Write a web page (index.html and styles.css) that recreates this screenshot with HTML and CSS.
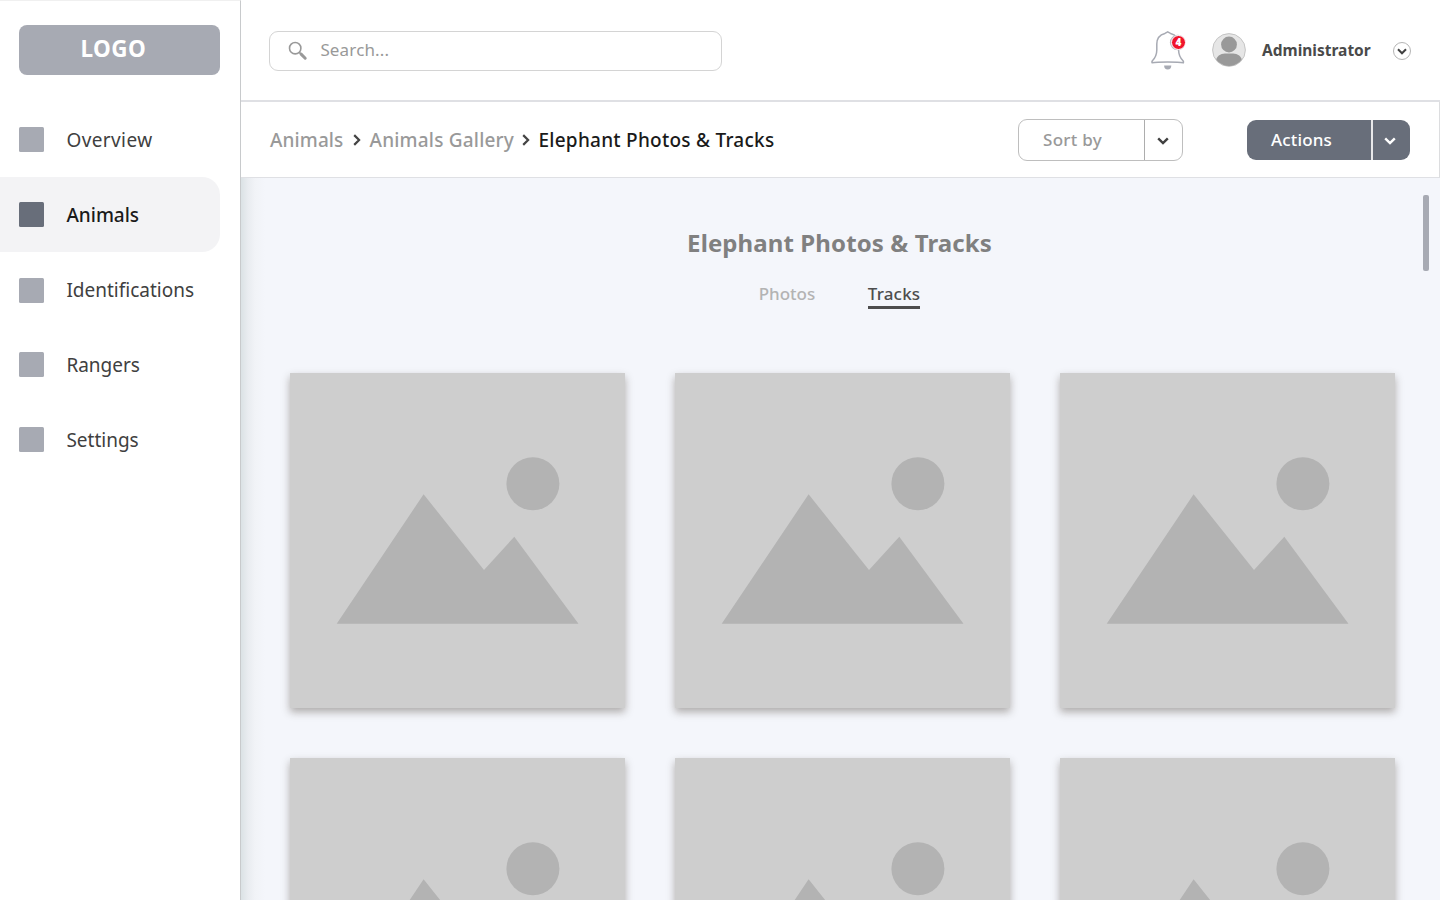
FILE: index.html
```html
<!DOCTYPE html>
<html lang="en">
<head>
<meta charset="utf-8">
<title>Elephant Photos &amp; Tracks</title>
<link rel="stylesheet" href="styles.css">
</head>
<body>
<svg class="defs" aria-hidden="true">
  <symbol id="chevron" viewBox="0 0 12 8"><path d="M1.2 1.300 6 6.100l4.800-4.800" fill="none" stroke="currentColor" stroke-width="2.400"/></symbol>
  <symbol id="landscape" viewBox="0 0 335 335">
    <circle cx="242.900" cy="110.700" r="26.500" fill="#b3b3b3"/>
    <path d="M46.700 250.800 133.600 121.300 194 197l30.300-33.300 64.200 87.100z" fill="#b3b3b3"/>
  </symbol>
</svg>
<div class="app">
  <aside class="sidebar">
    <div class="logo">LOGO</div>
    <nav class="nav">
      <a class="nav-item nav-overview"><span class="square"></span>Overview</a>
      <a class="nav-item active"><span class="square"></span>Animals</a>
      <a class="nav-item"><span class="square low"></span>Identifications</a>
      <a class="nav-item"><span class="square"></span>Rangers</a>
      <a class="nav-item"><span class="square"></span>Settings</a>
    </nav>
  </aside>
  <div class="page">
    <header class="header">
      <div class="search">
        <svg class="search-icon" viewBox="0 0 20 20"><circle cx="7.200" cy="7.200" r="5.700" fill="none" stroke="#999" stroke-width="1.600"/><path d="m11.300 11.300 2 2" stroke="#999" stroke-width="1.800"/><path d="m13.100 13.100 4.100 4.100" stroke="#999" stroke-width="3" stroke-linecap="round"/></svg>
        <span>Search...</span>
      </div>
      <div class="user">
        <div class="bell">
          <svg viewBox="0 0 36 40"><path d="M17.700 1.800 14.900 3.400C9.500 4.800 6.800 8.800 6.800 14v6c0 4-1.200 7.800-4.800 11.200v1.600c3.200-.7 9-.9 15.700-.9s12.500.2 15.700.9v-1.600c-3.600-3.400-4.800-7.200-4.800-11.200v-6c0-5.200-2.700-9.200-8.100-10.600z" fill="#fff" stroke="#a7aab3" stroke-width="1.500" stroke-linejoin="round"/><path d="M14.100 35.400h7.200c0 2.600-1.300 4-3.600 4s-3.600-1.400-3.600-4z" fill="#a7aab3"/></svg>
          <span class="badge">4</span>
        </div>
        <svg class="avatar" viewBox="0 0 34 34"><defs><clipPath id="face"><circle cx="17" cy="17" r="16"/></clipPath></defs><circle cx="17" cy="17" r="16.400" fill="#e6e6e6" stroke="#c0c0c0" stroke-width=".9"/><g fill="#999" clip-path="url(#face)"><circle cx="17" cy="11.500" r="7.900"/><path d="M4 34v-5.500c0-5.300 4.500-8.100 9-8.100h8c4.500 0 9 2.800 9 8.100V34z"/></g></svg>
        <span class="user-name">Administrator</span>
        <span class="round"><svg class="chev small"><use href="#chevron"/></svg></span>
      </div>
    </header>
    <div class="toolbar">
      <div class="crumbs">
        <span class="crumb-a">Animals</span>
        <svg class="sep" viewBox="0 0 8 12"><path d="M1.200 1.100 6.100 6l-4.900 4.900" fill="none" stroke="#444" stroke-width="2.200"/></svg>
        <span class="crumb-b">Animals Gallery</span>
        <svg class="sep" viewBox="0 0 8 12"><path d="M1.200 1.100 6.100 6l-4.900 4.900" fill="none" stroke="#444" stroke-width="2.200"/></svg>
        <span class="crumb-current">Elephant Photos &amp; Tracks</span>
      </div>
      <div class="split sort"><span class="split-label">Sort by</span><span class="split-arrow"><svg class="chev"><use href="#chevron"/></svg></span></div>
      <div class="split actions"><span class="split-label">Actions</span><span class="split-arrow"><svg class="chev"><use href="#chevron"/></svg></span></div>
    </div>
    <main class="content">
      <h1>Elephant Photos &amp; Tracks</h1>
      <div class="tabs"><span class="tab">Photos</span><span class="tab selected">Tracks</span></div>
      <div class="grid">
        <svg class="card"><use href="#landscape"/></svg>
        <svg class="card"><use href="#landscape"/></svg>
        <svg class="card"><use href="#landscape"/></svg>
        <svg class="card"><use href="#landscape"/></svg>
        <svg class="card"><use href="#landscape"/></svg>
        <svg class="card"><use href="#landscape"/></svg>
      </div>
      <div class="scrollbar"></div>
    </main>
  </div>
</div>
</body>
</html>
```
FILE: styles.css
```css
* { box-sizing: border-box; }
body { margin: 0; font-family: "Noto Sans", "Open Sans", sans-serif; color: #404040; }
svg { display: block; flex: none; }
.defs { position: absolute; width: 0; height: 0; }
.app { display: flex; width: 1440px; height: 900px; overflow: hidden; background: #f4f6fb; }

.sidebar { position: relative; z-index: 3; flex: none; width: 241px; padding-top: 24px; background: #fff; border-top: 1px solid #f0f0f0; border-right: 1px solid #c8cacc; }
.logo { width: 201px; height: 50px; margin-left: 19.400px; padding-right: 13px; border-radius: 8px; background: #a7aab3; color: #fff; font-size: 22.500px; font-weight: 700; letter-spacing: .500px; line-height: 47px; text-align: center; }
.nav { margin-top: 27px; }
.nav-item { display: flex; align-items: center; gap: 22px; width: 220px; height: 75px; padding-left: 19.400px; font-size: 19px; line-height: 26px; }
.nav-overview { letter-spacing: .4px; }
.nav-item.active { background: #f3f3f5; border-radius: 0 18px 18px 0; color: #1a1a1a; font-weight: 500; }
.square { width: 25px; height: 25px; border-radius: 1.500px; background: #a7aab3; }
.square.low { margin-top: 1px; }
.active .square { background: #686e7a; }

.page { flex: 1; display: flex; flex-direction: column; min-width: 0; }
.header { position: relative; z-index: 2; display: flex; align-items: center; justify-content: space-between; flex: none; height: 102px; padding: 0 29.500px 0 28.400px; background: #fff; border-bottom: 2px solid #dfe0e4; }
.search { display: flex; align-items: center; gap: 12px; width: 453px; height: 40px; padding-left: 18px; border: 1.500px solid #d4d4d4; border-radius: 9px; color: #999; font-size: 17px; letter-spacing: .15px; line-height: 22px; margin-top: 1px; }
.search span { margin-top: -2px; }
.search-icon { width: 20px; height: 20px; margin-top: 1px; }
.user { display: flex; align-items: center; }
.bell { position: relative; width: 36px; height: 40px; margin-right: 26px; }
.bell svg { width: 36px; height: 40px; }
.badge { position: absolute; left: 21.500px; top: 5px; width: 15px; height: 15px; border: 1px solid #fff; border-radius: 50%; background: #f0142c; color: #fff; font-size: 10px; font-weight: 900; line-height: 13px; text-align: center; box-shadow: -.8px 0 0 .3px #b9b9c1; }
.avatar { width: 34px; height: 34px; margin-right: 16.500px; }
.user-name { width: 109px; margin-right: 21.500px; color: #4a4a4a; font-size: 15.500px; font-weight: 700; white-space: nowrap; }
.round { display: flex; align-items: center; justify-content: center; width: 18px; height: 18px; border: 1px solid #b5b5b5; border-radius: 50%; margin-top: 1px; padding-top: 1px; color: #404040; }
.chev { width: 12px; height: 8px; }
.chev.small { width: 10px; height: 7px; }

.toolbar { position: relative; z-index: 2; display: flex; align-items: center; flex: none; height: 76px; padding: 0 29px 0 29px; background: #fff; border-right: 1px solid #dcdddf; border-bottom: 1.500px solid #dfe0e4; }
.crumbs { display: flex; align-items: center; flex: 1; font-size: 19px; font-weight: 500; line-height: 26px; white-space: nowrap; color: #999; }
.crumb-a { width: 83px; letter-spacing: .1px; }
.crumb-b { width: 152.500px; letter-spacing: .2px; }
.sep { width: 8px; height: 12px; margin-top: 1px; }
.sep + span { margin-left: 8.500px; }
.crumb-current { letter-spacing: .25px; color: #1a1a1a; }
.split { display: flex; flex: none; border-radius: 9px; font-size: 17px; font-weight: 500; line-height: 22px; }
.split-label { display: flex; align-items: center; flex: 1; padding: 1px 0 0 24px; }
.split-arrow { display: flex; align-items: center; justify-content: center; padding: 3px 2px 0 0; }
.sort { width: 165px; height: 42px; border: 1.500px solid #bebebe; color: #999; letter-spacing: .3px; margin-right: 64px; }
.sort .split-arrow { width: 38px; border-left: 1px solid #adadad; color: #404040; }
.actions { width: 163px; height: 40px; background: #686e7a; color: #fff; letter-spacing: .15px; }
.actions .split-arrow { width: 39px; border-left: 2px solid #e8e8ea; padding-right: 3px; }

.content { position: relative; flex: 1; min-height: 0; padding: 48px 45px 0 49px; background: linear-gradient(90deg, #dbe2e5, #e9ecf0 7px, #f1f3f7 14px, #f4f6fb 24px); }
h1 { margin: 0; color: #808080; font-size: 24px; font-weight: 700; letter-spacing: .1px; line-height: 34px; text-align: center; padding-right: 6px; }
.tabs { display: flex; justify-content: center; gap: 52.500px; margin-top: 22px; padding-right: 6px; font-size: 17px; font-weight: 500; line-height: 24px; color: #b3b3b3; }
.tab { height: 27px; }
.tab.selected { border-bottom: 3px solid #4d4d4d; color: #4d4d4d; letter-spacing: .2px; }
.grid { display: grid; grid-template-columns: repeat(3, 335px); gap: 50px; margin-top: 64px; }
.card { width: 335px; height: 335px; background: #cecece; box-shadow: 0 4px 8px rgba(60, 50, 40, .38); }
.scrollbar { position: absolute; right: 11px; top: 17px; width: 6px; height: 76px; border-radius: 2px; background: #a7aab3; }
```
